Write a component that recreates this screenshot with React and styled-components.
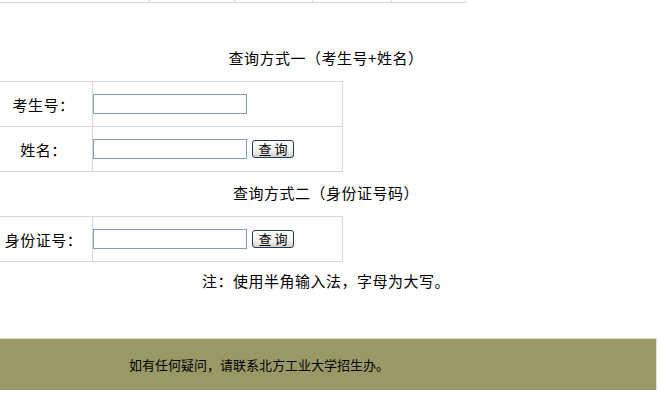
import React from 'react'
import styled, { createGlobalStyle } from 'styled-components'

const GlobalStyle = createGlobalStyle`
  html, body {
    margin: 0;
    padding: 0;
    background: #fff;
    overflow: hidden;
  }
  body {
    font-family: "Noto Sans CJK SC", "Noto Sans", sans-serif;
    color: #000;
  }
`

const topColumns = [155, 85, 78, 79, 74]

const App = () => {
  return (
    <>
      <GlobalStyle />
      <Page>
        <Content>
          <TopStrip>
            {topColumns.map((w, i) => (
              <TopCell key={i} $width={w} />
            ))}
          </TopStrip>

          <Title $top={45}>查询方式一（考生号+姓名）</Title>
          <FormTable $top={13}>
            <Row>
              <Label>考生号：</Label>
              <Field>
                <TextInput type="text" />
              </Field>
            </Row>
            <Row>
              <Label>姓名：</Label>
              <Field>
                <TextInput type="text" />
                <QueryButton type="button">查 询</QueryButton>
              </Field>
            </Row>
          </FormTable>

          <Title $top={11}>查询方式二（身份证号码）</Title>
          <FormTable $top={13}>
            <Row>
              <Label>身份证号：</Label>
              <Field>
                <TextInput type="text" />
                <QueryButton type="button">查 询</QueryButton>
              </Field>
            </Row>
          </FormTable>

          <Note>注：使用半角输入法，字母为大写。</Note>
        </Content>

        <Footer>如有任何疑问，请联系北方工业大学招生办。</Footer>
      </Page>
    </>
  )
}

const Page = styled.div`
  width: 803px;
  margin-left: -146px;
`

const Content = styled.div`
  width: 662px;
  margin-left: 141px;
`

const TopStrip = styled.div`
  display: flex;
  width: 471px;
  height: 20px;
  margin-top: -18px;
  border-bottom: 1px solid #d9d9d9;
`

const TopCell = styled.div`
  width: ${p => p.$width}px;
  box-sizing: border-box;
  border-right: 1px solid #d9d9d9;
`

const Title = styled.div`
  margin-top: ${p => p.$top}px;
  font-size: 15px;
  letter-spacing: 0.5px;
  line-height: 20px;
  text-align: center;
`

const FormTable = styled.div`
  margin-top: ${p => p.$top}px;
  width: 347px;
  border-top: 1px solid #d8d8d8;
  border-right: 1px solid #d8d8d8;
`

const Row = styled.div`
  display: grid;
  grid-template-columns: 98px 1fr;
  height: 44px;
  border-bottom: 1px solid #d8d8d8;
`

const Label = styled.div`
  display: flex;
  align-items: center;
  justify-content: center;
  font-size: 15px;
  letter-spacing: 0.5px;
  border-right: 1px solid #d8d8d8;
`

const Field = styled.div`
  display: flex;
  align-items: center;
  gap: 5px;
`

const TextInput = styled.input`
  box-sizing: border-box;
  width: 154px;
  height: 20px;
  margin: 0;
  padding: 0 2px;
  border: 1px solid #7f9db9;
  background: #fff;
  font-size: 13px;
  outline: none;
`

const QueryButton = styled.button`
  box-sizing: border-box;
  width: 42px;
  height: 18px;
  margin: 0;
  padding: 0;
  border: 1px solid #1d3a5e;
  border-radius: 3px;
  background: linear-gradient(#ffffff, #f4f3ee 60%, #d6d0c5);
  font-family: "Noto Sans CJK SC", sans-serif;
  font-size: 13px;
  line-height: 16px;
  color: #000;
  cursor: pointer;
`

const Note = styled.div`
  margin-top: 9px;
  font-size: 15px;
  letter-spacing: 0.5px;
  line-height: 20px;
  text-align: center;
`

const Footer = styled.div`
  margin-top: 47px;
  height: 52px;
  box-sizing: border-box;
  padding-left: 8px;
  border-top: 1px solid #dcdcd0;
  border-right: 1px solid #e4e4dc;
  background: #999966;
  display: flex;
  align-items: center;
  justify-content: center;
  font-size: 13px;
  color: #000;
`

export default App
